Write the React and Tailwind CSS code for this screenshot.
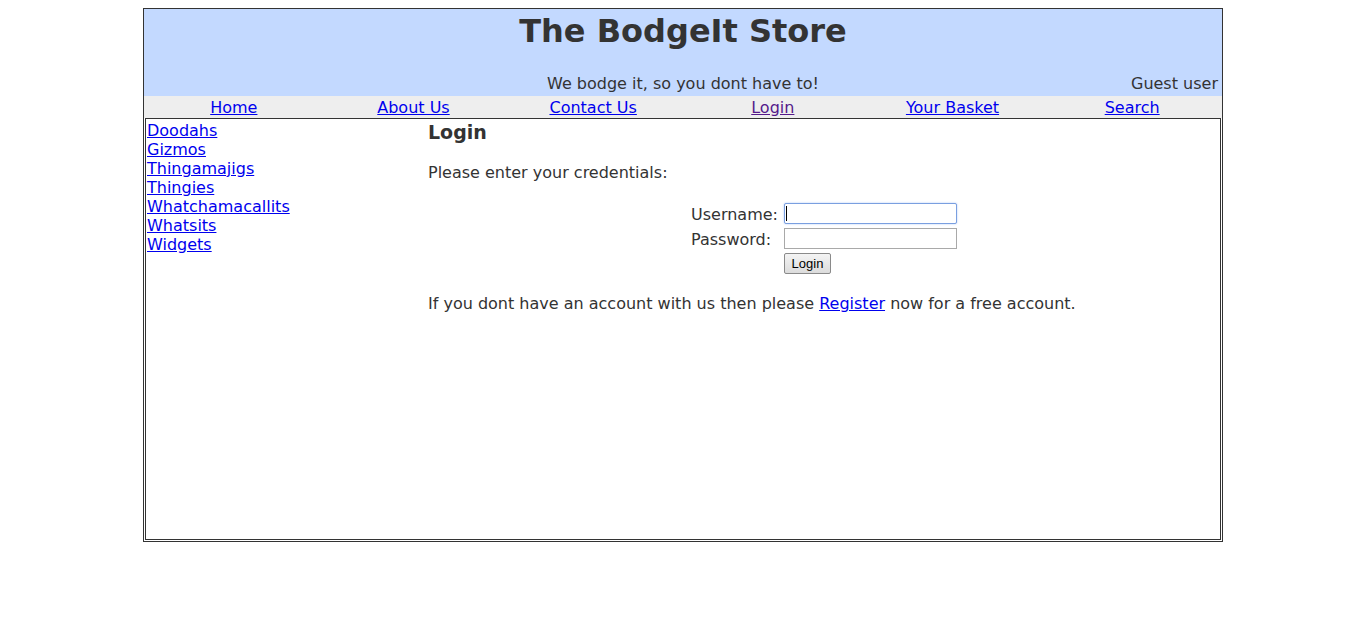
import React from 'react'

const font = { fontFamily: '"DejaVu Sans", Verdana, sans-serif' }

const navItems = [
  { label: 'Home' },
  { label: 'About Us' },
  { label: 'Contact Us' },
  { label: 'Login', visited: true },
  { label: 'Your Basket' },
  { label: 'Search' },
]

const categories = ['Doodahs', 'Gizmos', 'Thingamajigs', 'Thingies', 'Whatchamacallits', 'Whatsits', 'Widgets']

export default function App(){
  return (
    <div className="min-h-screen bg-white pt-2 text-[16px] text-[#333]" style={font}>
      <div className="mx-auto w-[1080px] border border-[#333]">
        {/* header */}
        <div className="h-[87px] bg-[#c3d9ff] pt-[4px]">
          <h1 className="text-center text-[32px] font-bold leading-[37px]">The BodgeIt Store</h1>
          <div className="mt-[24px] grid grid-cols-[30%_40%_30%] leading-[19px]">
            <div>&nbsp;</div>
            <div className="text-center">We bodge it, so you dont have to!</div>
            <div className="pr-[4px] text-right">Guest user</div>
          </div>
        </div>

        {/* nav */}
        <div className="grid h-[22px] grid-cols-6 items-center bg-[#eee] leading-[19px]">
          {navItems.map(n => (
            <div key={n.label} className="text-center">
              <a href="#" className={`underline ${n.visited ? 'text-[#551a8b]' : 'text-[#0000ee]'}`}>{n.label}</a>
            </div>
          ))}
        </div>

        {/* content */}
        <div className="px-px pb-px">
          <div className="flex h-[422px] border border-[#333]">
            <div className="w-[282px] pl-px pt-[2px] leading-[19px]">
              {categories.map(c => (
                <div key={c}><a href="#" className="text-[#0000ee] underline">{c}</a></div>
              ))}
            </div>
            <div className="flex-1 pt-[2px]">
              <h3 className="text-[19px] font-bold leading-[22px]">Login</h3>
              <p className="mt-[20px] leading-[19px]">Please enter your credentials:</p>
              <div className="mx-auto mt-[19px] w-[266px]">
                <div className="flex h-[25px] items-center">
                  <div className="w-[93px] pt-[2px]">Username:</div>
                  <div className="relative">
                    <input className="block h-[21px] w-[173px] rounded-[2px] border border-[#7a9fe0] bg-white px-[2px] text-[13px] outline-none shadow-[0_0_2px_#a9c4f5]" />
                    <span className="absolute left-[2px] top-[3px] h-[15px] w-px bg-black"></span>
                  </div>
                </div>
                <div className="flex h-[25px] items-center">
                  <div className="w-[93px] pt-[2px]">Password:</div>
                  <input type="password" className="block h-[21px] w-[173px] border border-[#a9a9a9] bg-white px-[2px] text-[13px] outline-none" />
                </div>
                <div className="flex h-[25px] items-center">
                  <div className="w-[93px]"></div>
                  <button className="h-[21px] w-[47px] rounded-[2px] border border-[#8a8a8a] bg-gradient-to-b from-[#f4f4f4] to-[#dcdcdc] text-[13px] leading-[19px] text-black" style={{ fontFamily: '"Liberation Sans", Arial, sans-serif' }}>Login</button>
                </div>
              </div>
              <p className="mt-[18px] leading-[19px]">
                If you dont have an account with us then please <a href="#" className="text-[#0000ee] underline">Register</a> now for a free account.
              </p>
            </div>
          </div>
        </div>
      </div>
    </div>
  )
}
